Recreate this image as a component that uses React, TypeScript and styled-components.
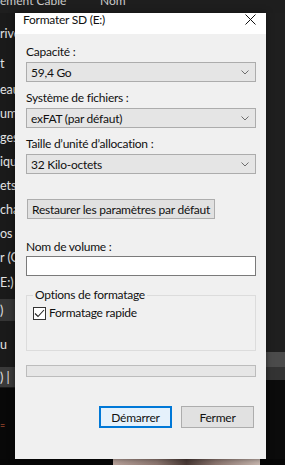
import React from 'react';
import styled, { createGlobalStyle } from 'styled-components';

const GlobalStyle = createGlobalStyle`
  html, body {
    margin: 0;
    padding: 0;
    background: #1c1c1c;
  }
  * {
    box-sizing: border-box;
  }
`;

const UI_FONT = `Lato, "Liberation Sans", sans-serif`;

type NavEntry = {
  text: string;
  top: number;
  height: number;
  tone?: 'selected' | 'band';
};

// the bits of the explorer tree that peek out on the left of the dialog
const navEntries: NavEntry[] = [
  { text: 'rive', top: 8, height: 24 },
  { text: 't', top: 6, height: 24 },
  { text: 'eau', top: 2, height: 24 },
  { text: 'um', top: 0, height: 24 },
  { text: 'ges', top: 0, height: 24 },
  { text: 'iqu', top: 0, height: 24 },
  { text: 'ets', top: 0, height: 24 },
  { text: 'cha', top: 0, height: 24 },
  { text: 'os', top: 0, height: 24 },
  { text: 'r (C', top: 0, height: 24 },
  { text: 'E:)', top: 1, height: 24 },
  { text: ')', top: 5, height: 22, tone: 'selected' },
  { text: 'u', top: 11, height: 24 },
  { text: ') |', top: 11, height: 20, tone: 'band' },
];

function Chevron() {
  return (
    <svg width='8' height='5' viewBox='0 0 8 5'>
      <path d='M0.5 0.5 L4 4 L7.5 0.5' fill='none' stroke='#6d6d6d' strokeWidth='1' />
    </svg>
  );
}

function Combo({ value }: { value: string }) {
  return (
    <ComboBox>
      <span>{value}</span>
      <Chevron />
    </ComboBox>
  );
}

/**
 * Windows "Format" dialog over a dark explorer window
 */
function App() {
  return (
    <>
      <GlobalStyle />
      <Desktop>
        <HeaderRow>
          <HeaderCell $width={100}>ement Cable</HeaderCell>
          <HeaderCell $width={60}>Nom</HeaderCell>
        </HeaderRow>

        <ExplorerBody>
          <NavPane>
            {navEntries.map((entry, i) => (
              <NavItem key={i} $top={entry.top} $height={entry.height} $tone={entry.tone}>
                {entry.text}
              </NavItem>
            ))}
            <NavMark>=</NavMark>
          </NavPane>
          <ContentPane>
            <Filler />
            <StripBand $color='#4b4b4b' $height={15} />
            <StripBand $color='#333333' $height={13} />
            <DarkFill />
          </ContentPane>
        </ExplorerBody>

        <PhotoStrip>
          <PhotoBlob />
        </PhotoStrip>

        <Dialog>
          <TitleBar>
            <Title>Formater SD (E:)</Title>
            <CloseIcon width='11' height='11' viewBox='0 0 11 11'>
              <path d='M0.5 0.5 L10.5 10.5 M10.5 0.5 L0.5 10.5' stroke='#111' strokeWidth='1' />
            </CloseIcon>
          </TitleBar>

          <DialogBody>
            <Label $gap={0}>Capacité :</Label>
            <Field>
              <Combo value='59,4 Go' />
            </Field>

            <Label $gap={9}>Système de fichiers :</Label>
            <Field>
              <Combo value='exFAT (par défaut)' />
            </Field>

            <Label $gap={9}>Taille d’unité d’allocation :</Label>
            <Field>
              <Combo value='32 Kilo-octets' />
            </Field>

            <RestoreButton>Restaurer les paramètres par défaut</RestoreButton>

            <Label $gap={21}>Nom de volume :</Label>
            <TextInput />

            <GroupBox>
              <Legend>Options de formatage</Legend>
              <CheckRow>
                <CheckBox>
                  <svg width='11' height='11' viewBox='0 0 11 11'>
                    <path d='M1 5.5 L4 8.5 L10 2' fill='none' stroke='#222' strokeWidth='1.1' />
                  </svg>
                </CheckBox>
                <span>Formatage rapide</span>
              </CheckRow>
            </GroupBox>

            <Progress />

            <ButtonRow>
              <PushButton $primary>Démarrer</PushButton>
              <PushButton>Fermer</PushButton>
            </ButtonRow>
          </DialogBody>
        </Dialog>
      </Desktop>
    </>
  );
}

export default App;

const Desktop = styled.div`
  position: relative;
  display: flex;
  flex-direction: column;
  width: 285px;
  height: 465px;
  overflow: hidden;
  background: #1c1c1c;
  font-family: ${UI_FONT};
  font-size: 12px;
`;

const HeaderRow = styled.div`
  display: flex;
  height: 13px;
  overflow: hidden;
  background: #1e1e1e;
`;

const HeaderCell = styled.div<{ $width: number }>`
  width: ${(p) => p.$width}px;
  margin-top: -6px;
  line-height: 14px;
  color: #c9c9c9;
  white-space: nowrap;
`;

const ExplorerBody = styled.div`
  display: flex;
  flex: 1;
  min-height: 0;
`;

const NavPane = styled.div`
  display: flex;
  flex-direction: column;
  width: 130px;
  background: linear-gradient(#1a1a1a 0, #1a1a1a 375px, #080808 375px);
`;

const NavItem = styled.div<{ $top: number; $height: number; $tone?: 'selected' | 'band' }>`
  display: flex;
  align-items: center;
  height: ${(p) => p.$height}px;
  margin-top: ${(p) => p.$top}px;
  color: #e2e2e2;
  font-size: 12.5px;
  white-space: nowrap;
  background: ${(p) =>
    p.$tone === 'selected' ? '#353535' : p.$tone === 'band' ? '#3a3a3a' : 'transparent'};
`;

const NavMark = styled.div`
  margin-top: 34px;
  color: #d0603c;
  font-size: 9px;
  line-height: 10px;
`;

const ContentPane = styled.div`
  display: flex;
  flex-direction: column;
  flex: 1;
`;

const Filler = styled.div`
  height: 339px;
  background: #1f1f1f;
`;

const StripBand = styled.div<{ $color: string; $height: number }>`
  height: ${(p) => p.$height}px;
  background: ${(p) => p.$color};
`;

const DarkFill = styled.div`
  flex: 1;
  background: #0b0b0b;
`;

const PhotoStrip = styled.div`
  display: flex;
  height: 6px;
  padding-left: 113px;
  background: #070707;
`;

const PhotoBlob = styled.div`
  width: 147px;
  background: linear-gradient(90deg, #b9a39b 0%, #8d7770 30%, #4a3a36 50%, #8d7770 70%, #c9b8b0 100%);
`;

const Dialog = styled.div`
  position: absolute;
  left: 15px;
  top: 13px;
  display: flex;
  flex-direction: column;
  width: 251px;
  height: 446px;
  background: #f0f0f0;
  box-shadow: 0 0 6px rgba(0, 0, 0, 0.5);
  color: #000;
  letter-spacing: -0.25px;
`;

const TitleBar = styled.div`
  display: flex;
  justify-content: space-between;
  height: 21px;
  padding: 0 10px 0 8px;
  background: #ffffff;
`;

const Title = styled.div`
  line-height: 14px;
  color: #111;
`;

const CloseIcon = styled.svg`
  margin-top: 1px;
`;

const DialogBody = styled.div`
  display: flex;
  flex-direction: column;
  flex: 1;
  padding: 11px 10px 0 11px;
`;

const Label = styled.div<{ $gap: number }>`
  margin-top: ${(p) => p.$gap}px;
  line-height: 14px;
  color: #111;
`;

const Field = styled.div`
  margin-top: 3px;
`;

const ComboBox = styled.div`
  display: flex;
  align-items: center;
  justify-content: space-between;
  height: 20px;
  padding: 0 6px 0 4px;
  background: #e5e5e5;
  border: 1px solid #acacac;
  color: #111;
`;

const RestoreButton = styled.div`
  align-self: flex-start;
  display: flex;
  align-items: center;
  height: 20px;
  margin-top: 25px;
  margin-left: 1px;
  padding: 0 4px 0 4px;
  background: #e1e1e1;
  border: 1px solid #adadad;
  color: #111;
  white-space: nowrap;
`;

const TextInput = styled.div`
  height: 20px;
  margin-top: 2px;
  background: #ffffff;
  border: 1px solid #7a7a7a;
`;

const GroupBox = styled.fieldset`
  margin: 12px 0 0 0;
  padding: 0 6px 30px 6px;
  border: 1px solid #dcdcdc;
  min-width: 0;
`;

const Legend = styled.legend`
  padding: 0 2px;
  line-height: 14px;
  color: #111;
`;

const CheckRow = styled.div`
  display: flex;
  align-items: center;
  gap: 3px;
  margin-top: 4px;
  line-height: 14px;
  color: #111;
`;

const CheckBox = styled.div`
  display: flex;
  align-items: center;
  justify-content: center;
  width: 13px;
  height: 13px;
  background: #ffffff;
  border: 1px solid #333333;
`;

const Progress = styled.div`
  height: 12px;
  margin-top: 14px;
  background: #e6e6e6;
  border: 1px solid #bcbcbc;
`;

const ButtonRow = styled.div`
  display: flex;
  justify-content: flex-end;
  gap: 9px;
  margin-top: 29px;
  padding-right: 2px;
`;

const PushButton = styled.div<{ $primary?: boolean }>`
  display: flex;
  align-items: center;
  justify-content: center;
  width: 73px;
  height: 22px;
  background: ${(p) => (p.$primary ? '#e5f1fb' : '#e1e1e1')};
  border: ${(p) => (p.$primary ? '2px solid #0078d7' : '1px solid #adadad')};
  color: #111;
`;
